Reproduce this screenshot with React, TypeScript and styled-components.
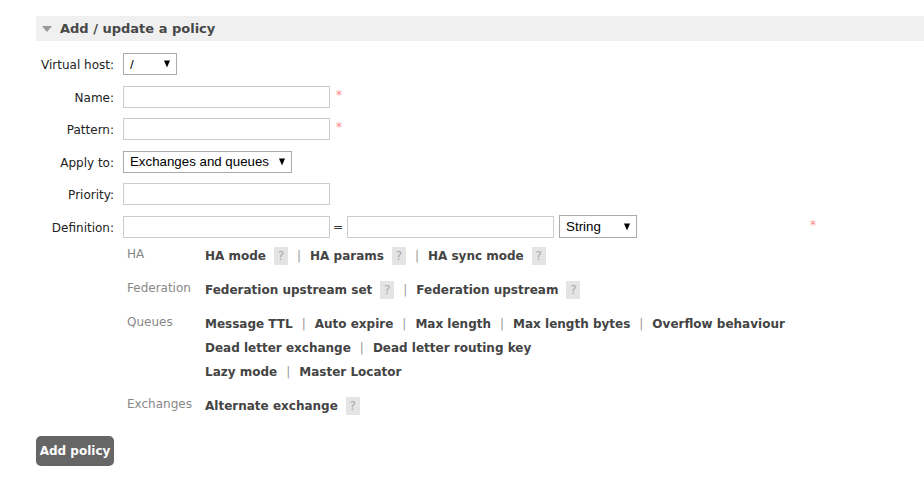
import React from "react";
import styled, { createGlobalStyle } from "styled-components";

const Global = createGlobalStyle`
  html, body { margin: 0; padding: 0; background: #fff; }
  body {
    font-family: "DejaVu Sans", Verdana, "Liberation Sans", sans-serif;
    font-size: 12px;
    color: #222;
  }
  * { box-sizing: border-box; }
`;

const Page = styled.div`
  padding: 16px 0 0 36px;
  width: 924px;
`;

const Header = styled.div`
  height: 25px;
  background: #f0f0f0;
  display: flex;
  align-items: center;
  padding-left: 6px;
  gap: 8px;
`;

const Tri = styled.span`
  width: 0;
  height: 0;
  border-left: 5px solid transparent;
  border-right: 5px solid transparent;
  border-top: 6px solid #999;
`;

const Title = styled.h2`
  margin: 0;
  font-size: 13px;
  font-weight: bold;
  color: #484848;
`;

const Form = styled.div`
  margin-top: 12px;
  display: flex;
  flex-direction: column;
  gap: 10.6px;
`;

const Row = styled.div`
  display: flex;
  align-items: center;
  height: 22px;
`;

const Label = styled.label`
  width: 78px;
  margin-right: 9px;
  text-align: right;
  white-space: nowrap;
  color: #222;
  padding-top: 2px;
`;

const Input = styled.input<{ $w?: number }>`
  width: ${(p) => p.$w ?? 207}px;
  height: 22px;
  border: 1px solid #ccc;
  padding: 2px 4px;
  font: inherit;
  outline: none;
`;

const SelectWrap = styled.span<{ $w: number; $h?: number; $ml?: number }>`
  position: relative;
  display: inline-block;
  width: ${(p) => p.$w}px;
  height: ${(p) => p.$h ?? 22}px;
  margin-left: ${(p) => p.$ml ?? 0}px;
`;

const Select = styled.select`
  appearance: none;
  width: 100%;
  height: 100%;
  border: 1px solid #aaa;
  background: #fff;
  font-family: "Liberation Sans", Arial, sans-serif;
  font-size: 13.3px;
  color: #000;
  padding: 0 18px 0 6px;
  border-radius: 0;
  outline: none;
`;

const Arrow = styled.span`
  position: absolute;
  right: 7px;
  top: 50%;
  transform: translateY(-50%);
  width: 0;
  height: 0;
  border-left: 3.5px solid transparent;
  border-right: 3.5px solid transparent;
  border-top: 7px solid #000;
  pointer-events: none;
`;

const Star = styled.span<{ $ml?: number }>`
  color: #f88;
  margin-left: ${(p) => p.$ml ?? 6}px;
  align-self: flex-start;
  margin-top: 2px;
  font-size: 12px;
`;

const Eq = styled.span`
  margin: 0 4px 0 3px;
  color: #333;
`;

const Help = styled.div`
  margin-left: 91px;
  margin-top: -4.6px;
  display: grid;
  grid-template-columns: 78px auto;
  row-gap: 10px;
`;

const Category = styled.div`
  color: #888;
  line-height: 20px;
`;

const Lines = styled.div`
  display: flex;
  flex-direction: column;
`;

const Line = styled.div`
  display: flex;
  align-items: center;
  height: 24px;
  white-space: nowrap;
`;

const Arg = styled.span`
  font-weight: bold;
  color: #444;
`;

const Badge = styled.span`
  display: inline-flex;
  align-items: center;
  justify-content: center;
  width: 14px;
  height: 18px;
  margin-left: 8px;
  background: #e4e4e4;
  color: #aaa;
  font-size: 12px;
`;

const Sep = styled.span`
  color: #999;
  margin: 0 9px;
`;

const Button = styled.button`
  margin-top: 18px;
  width: 78px;
  height: 30px;
  border: none;
  border-radius: 5px;
  background: #666;
  color: #fff;
  font: inherit;
  font-weight: bold;
  padding: 0;
`;

type Item = { name: string; help?: boolean };

const groups: { cat: string; lines: Item[][] }[] = [
  {
    cat: "HA",
    lines: [[
      { name: "HA mode", help: true },
      { name: "HA params", help: true },
      { name: "HA sync mode", help: true },
    ]],
  },
  {
    cat: "Federation",
    lines: [[
      { name: "Federation upstream set", help: true },
      { name: "Federation upstream", help: true },
    ]],
  },
  {
    cat: "Queues",
    lines: [
      [
        { name: "Message TTL" },
        { name: "Auto expire" },
        { name: "Max length" },
        { name: "Max length bytes" },
        { name: "Overflow behaviour" },
      ],
      [{ name: "Dead letter exchange" }, { name: "Dead letter routing key" }],
      [{ name: "Lazy mode" }, { name: "Master Locator" }],
    ],
  },
  {
    cat: "Exchanges",
    lines: [[{ name: "Alternate exchange", help: true }]],
  },
];

const Sel = ({ w, h, ml, value }: { w: number; h?: number; ml?: number; value: string }) => (
  <SelectWrap $w={w} $h={h} $ml={ml}>
    <Select defaultValue={value}>
      <option>{value}</option>
    </Select>
    <Arrow />
  </SelectWrap>
);

export default function App() {
  return (
    <>
      <Global />
      <Page>
        <Header>
          <Tri />
          <Title>Add / update a policy</Title>
        </Header>
        <Form>
          <Row>
            <Label>Virtual host:</Label>
            <Sel w={54} value="/" />
          </Row>
          <Row>
            <Label>Name:</Label>
            <Input />
            <Star>*</Star>
          </Row>
          <Row>
            <Label>Pattern:</Label>
            <Input />
            <Star>*</Star>
          </Row>
          <Row>
            <Label>Apply to:</Label>
            <Sel w={169} value="Exchanges and queues" />
          </Row>
          <Row>
            <Label>Priority:</Label>
            <Input />
          </Row>
          <Row>
            <Label>Definition:</Label>
            <Input />
            <Eq>=</Eq>
            <Input />
            <Sel w={78} h={23} ml={5} value="String" />
            <Star $ml={173}>*</Star>
          </Row>
          <Help>
            {groups.map((g) => (
              <React.Fragment key={g.cat}>
                <Category>{g.cat}</Category>
                <Lines>
                  {g.lines.map((line, li) => (
                    <Line key={li}>
                      {line.map((it, i) => (
                        <React.Fragment key={it.name}>
                          {i > 0 && <Sep>|</Sep>}
                          <Arg>{it.name}</Arg>
                          {it.help && <Badge>?</Badge>}
                        </React.Fragment>
                      ))}
                    </Line>
                  ))}
                </Lines>
              </React.Fragment>
            ))}
          </Help>
        </Form>
        <Button>Add policy</Button>
      </Page>
    </>
  );
}
